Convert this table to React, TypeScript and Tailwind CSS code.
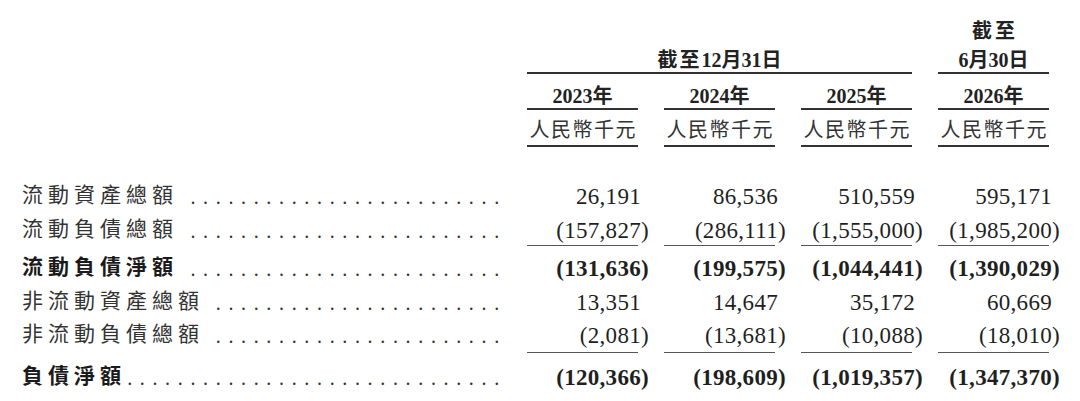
import React from "react";

type Row = {
  label: string;
  bold?: boolean;
  dots: number;
  vals: string[];
  mt: string;
};

const rows: Row[] = [
  { label: "流動資產總額", dots: 25, vals: ["26,191", "86,536", "510,559", "595,171"], mt: "mt-[36px]" },
  { label: "流動負債總額", dots: 25, vals: ["(157,827)", "(286,111)", "(1,555,000)", "(1,985,200)"], mt: "mt-[6px]" },
  { label: "流動負債淨額", bold: true, dots: 25, vals: ["(131,636)", "(199,575)", "(1,044,441)", "(1,390,029)"], mt: "mt-[9px]" },
  { label: "非流動資產總額", dots: 23, vals: ["13,351", "14,647", "35,172", "60,669"], mt: "mt-[6px]" },
  { label: "非流動負債總額", dots: 23, vals: ["(2,081)", "(13,681)", "(10,088)", "(18,010)"], mt: "mt-[5px]" },
  { label: "負債淨額", bold: true, dots: 30, vals: ["(120,366)", "(198,609)", "(1,019,357)", "(1,347,370)"], mt: "mt-[11px]" },
];

const FONT = "font-['Liberation_Serif','Noto_Sans_CJK_TC',serif]";

function Num({ v, bold }: { v: string; bold?: boolean }) {
  const neg = v.startsWith("(");
  const body = neg ? v.slice(0, -1) : v;
  return (
    <div className="w-[111px] shrink-0 flex justify-end">
      <span className={`text-[23px] leading-[28px] tracking-[0.3px] whitespace-nowrap ${bold ? "font-bold" : ""}`}>{body}</span>
      <span className={`w-[8px] -mr-[11px] text-[23px] leading-[28px] ${bold ? "font-bold" : ""}`}>{neg ? ")" : ""}</span>
    </div>
  );
}

function Rule({ mt }: { mt: string }) {
  return (
    <div className={`flex ${mt}`}>
      <div className="w-[527px] shrink-0" />
      <div className="flex gap-[26px]">
        {[0, 1, 2, 3].map((i) => (
          <div key={i} className="w-[111px] h-px bg-[#555]" />
        ))}
      </div>
    </div>
  );
}

function BodyRow({ r }: { r: Row }) {
  return (
    <div className={`flex ${r.mt}`}>
      <div className="w-[527px] shrink-0 flex items-baseline pl-[22px] pr-[24px]">
        <span className={`text-[21px] leading-[28px] tracking-[5px] whitespace-nowrap -translate-y-[2px] ${r.bold ? "font-bold text-[#1a1a1a]" : "text-[#333]"}`}>
          {r.label}
        </span>
        <div className="flex-1 flex justify-end overflow-hidden">
          {Array.from({ length: r.dots }).map((_, i) => (
            <span key={i} className="w-[12.67px] shrink-0 text-center text-[20px] leading-[28px] text-[#333]">
              .
            </span>
          ))}
        </div>
      </div>
      <div className="flex gap-[26px] text-[#1f1f1f]">
        {r.vals.map((v, i) => (
          <Num key={i} v={v} bold={r.bold} />
        ))}
      </div>
    </div>
  );
}

function RmbYear({ year }: { year: string }) {
  return (
    <>
      <div className="h-[34px] flex items-end justify-center">
        <span className="text-[20px] leading-[24px] font-bold whitespace-nowrap">{year}</span>
      </div>
      <div className="h-[2px] bg-[#333]" />
      <div className="h-[35px] flex items-end justify-center pb-[3px]">
        <span className="text-[20px] leading-[24px] tracking-[1.5px] pl-[1.5px] whitespace-nowrap text-[#333]">人民幣千元</span>
      </div>
      <div className="h-[2px] bg-[#333]" />
    </>
  );
}

function YearCol({ year }: { year: string }) {
  return (
    <div className="w-[111px] flex flex-col">
      <RmbYear year={year} />
    </div>
  );
}

export default function App() {
  return (
    <div className={`w-[1080px] h-[401px] bg-white overflow-hidden text-[#222] ${FONT}`}>
      <div className="flex">
        <div className="w-[527px] shrink-0" />
        <div className="flex gap-[26px]">
          <div className="w-[385px] flex flex-col">
            <div className="h-[72px] flex items-end justify-center">
              <span className="text-[20px] leading-[24px] font-bold whitespace-nowrap">
                <span className="tracking-[2px]">截至</span>12月31日
              </span>
            </div>
            <div className="h-[2px] bg-[#333]" />
            <div className="flex gap-[26px]">
              <YearCol year="2023年" />
              <YearCol year="2024年" />
              <YearCol year="2025年" />
            </div>
          </div>
          <div className="w-[111px] flex flex-col">
            <div className="h-[72px] flex flex-col items-center justify-end">
              <span className="text-[20px] leading-[24px] font-bold tracking-[3px] pl-[3px] mb-[5px] whitespace-nowrap">截至</span>
              <span className="text-[20px] leading-[24px] font-bold whitespace-nowrap">6月30日</span>
            </div>
            <div className="h-[2px] bg-[#333]" />
            <RmbYear year="2026年" />
          </div>
        </div>
      </div>
      <BodyRow r={rows[0]} />
      <BodyRow r={rows[1]} />
      <Rule mt="mt-0" />
      <BodyRow r={rows[2]} />
      <BodyRow r={rows[3]} />
      <BodyRow r={rows[4]} />
      <Rule mt="mt-[2px]" />
      <BodyRow r={rows[5]} />
    </div>
  );
}
